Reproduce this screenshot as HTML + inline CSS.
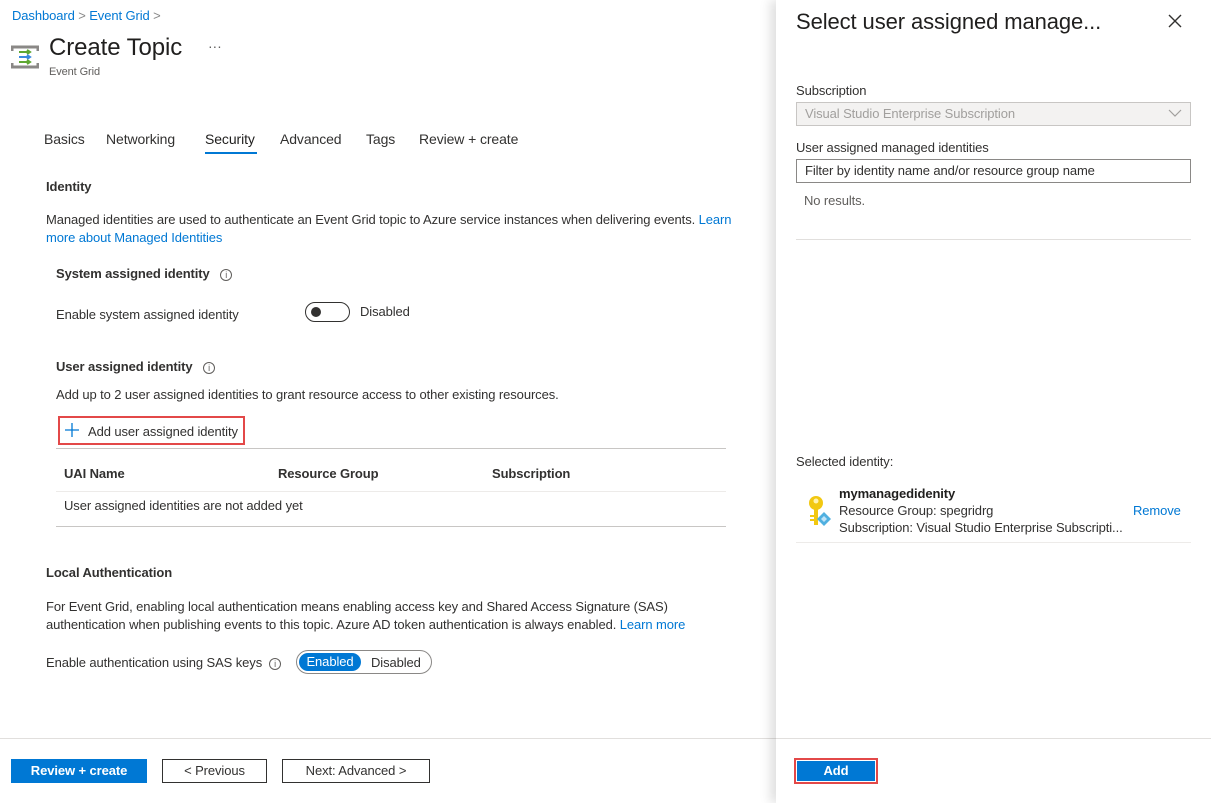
<!DOCTYPE html>
<html><head><meta charset="utf-8"><style>
*{margin:0;padding:0;box-sizing:border-box}
body{width:1211px;height:803px;overflow:hidden;background:#fff;font-family:"Liberation Sans",sans-serif;font-size:13px;color:#323130;position:relative;letter-spacing:-0.1px}
.a{position:absolute;white-space:nowrap}
.l{color:#0078d4}
.b{font-weight:bold}
.info{display:inline-block;width:12px;height:12px;border:1px solid #605e5c;border-radius:50%;font-size:9px;text-align:center;line-height:10px;color:#605e5c;vertical-align:middle}
.btn{position:absolute;height:24px;border:1px solid #323130;text-align:center;line-height:22px;font-size:13px}
</style></head><body>
<div class="a" style="left:12px;top:8px;font-size:13px"><span class="l">Dashboard</span> <span style="color:#888">&gt;</span> <span class="l">Event Grid</span> <span style="color:#888">&gt;</span></div>
<svg class="a" style="left:11px;top:44px" width="28" height="26"><path d="M1 7V3H27V7M1 19V23H27V19" stroke="#8a8886" stroke-width="3" fill="none"/><path d="M8 8H19M16 6L19 8L16 10" stroke="#5ea832" stroke-width="2" fill="none"/><path d="M8 13H19M16 11L19 13L16 15" stroke="#3c8ae0" stroke-width="2" fill="none"/><path d="M8 18H19M16 16L19 18L16 20" stroke="#5ea832" stroke-width="2" fill="none"/></svg>
<div class="a" style="left:49px;top:34px;font-size:24px;color:#201f1e">Create Topic</div>
<div class="a" style="left:208px;top:38px;font-size:14px;color:#605e5c">···</div>
<div class="a" style="left:49px;top:66px;font-size:11px;color:#605e5c">Event Grid</div>

<div class="a" style="left:44px;top:131px;font-size:14px">Basics</div>
<div class="a" style="left:106px;top:131px;font-size:14px">Networking</div>
<div class="a" style="left:205px;top:131px;font-size:14px;color:#201f1e">Security</div>
<div class="a" style="left:205px;top:152px;width:52px;height:2px;background:#0078d4"></div>
<div class="a" style="left:280px;top:131px;font-size:14px">Advanced</div>
<div class="a" style="left:366px;top:131px;font-size:14px">Tags</div>
<div class="a" style="left:419px;top:131px;font-size:14px">Review + create</div>

<div class="a b" style="left:46px;top:179px">Identity</div>
<div class="a" style="left:46px;top:211px;line-height:18px">Managed identities are used to authenticate an Event Grid topic to Azure service instances when delivering events. <span class="l">Learn</span><br><span class="l">more about Managed Identities</span></div>
<div class="a b" style="left:56px;top:266px">System assigned identity &nbsp;&nbsp;<span class="info" style="font-weight:normal">i</span></div>
<div class="a" style="left:56px;top:307px">Enable system assigned identity</div>
<div class="a" style="left:305px;top:302px;width:45px;height:20px;border:1px solid #323130;border-radius:10px"><div style="position:absolute;left:5px;top:4px;width:10px;height:10px;border-radius:50%;background:#323130"></div></div>
<div class="a" style="left:360px;top:304px">Disabled</div>
<div class="a b" style="left:56px;top:359px">User assigned identity &nbsp;&nbsp;<span class="info" style="font-weight:normal">i</span></div>
<div class="a" style="left:56px;top:387px">Add up to 2 user assigned identities to grant resource access to other existing resources.</div>
<div class="a" style="left:58px;top:416px;width:187px;height:29px;border:2px solid #e34848"></div>
<svg class="a" style="left:64px;top:422px" width="16" height="16"><path d="M8 1V15M1 8H15" stroke="#0078d4" stroke-width="1.3"/></svg>
<div class="a" style="left:88px;top:424px">Add user assigned identity</div>
<div class="a" style="left:56px;top:448px;width:670px;height:1px;background:#c8c6c4"></div>
<div class="a b" style="left:64px;top:466px">UAI Name</div>
<div class="a b" style="left:278px;top:466px">Resource Group</div>
<div class="a b" style="left:492px;top:466px">Subscription</div>
<div class="a" style="left:56px;top:491px;width:670px;height:1px;background:#edebe9"></div>
<div class="a" style="left:64px;top:498px">User assigned identities are not added yet</div>
<div class="a" style="left:56px;top:526px;width:670px;height:1px;background:#c8c6c4"></div>

<div class="a b" style="left:46px;top:565px">Local Authentication</div>
<div class="a" style="left:46px;top:598px;line-height:18px">For Event Grid, enabling local authentication means enabling access key and Shared Access Signature (SAS)<br>authentication when publishing events to this topic. Azure AD token authentication is always enabled. <span class="l">Learn more</span></div>
<div class="a" style="left:46px;top:655px">Enable authentication using SAS keys &nbsp;<span class="info">i</span></div>
<div class="a" style="left:296px;top:650px;width:136px;height:24px;border:1px solid #8a8886;border-radius:12px"></div>
<div class="a" style="left:299px;top:653px;width:62px;height:18px;border-radius:9px;background:#0078d4;color:#fff;text-align:center;line-height:18px">Enabled</div>
<div class="a" style="left:371px;top:655px">Disabled</div>

<div class="a" style="left:0;top:738px;width:776px;height:1px;background:#e1dfdd"></div>
<div class="btn b" style="left:11px;top:759px;width:136px;background:#0078d4;border-color:#0078d4;color:#fff">Review + create</div>
<div class="btn" style="left:162px;top:759px;width:105px">&lt; Previous</div>
<div class="btn" style="left:282px;top:759px;width:148px">Next: Advanced &gt;</div>

<div class="a" style="left:776px;top:0;width:435px;height:803px;background:#fff;box-shadow:-6px 0 10px rgba(0,0,0,0.12)"></div>
<div class="a" style="left:796px;top:9px;font-size:22px;color:#201f1e">Select user assigned manage...</div>
<svg class="a" style="left:1168px;top:14px" width="14" height="14"><path d="M1 1L13 13M13 1L1 13" stroke="#323130" stroke-width="1.4"/></svg>
<div class="a" style="left:796px;top:83px">Subscription</div>
<div class="a" style="left:796px;top:102px;width:395px;height:24px;background:#f3f2f1;border:1px solid #c8c6c4;color:#a19f9d;padding-left:8px;line-height:22px">Visual Studio Enterprise Subscription</div>
<svg class="a" style="left:1168px;top:109px" width="14" height="9"><path d="M1 1L7 7L13 1" stroke="#a19f9d" fill="none" stroke-width="1.2"/></svg>
<div class="a" style="left:796px;top:140px">User assigned managed identities</div>
<div class="a" style="left:796px;top:159px;width:395px;height:24px;border:1px solid #8a8886;padding-left:8px;line-height:22px;color:#323130">Filter by identity name and/or resource group name</div>
<div class="a" style="left:804px;top:193px;color:#605e5c">No results.</div>
<div class="a" style="left:796px;top:239px;width:395px;height:1px;background:#e1dfdd"></div>
<div class="a" style="left:796px;top:454px">Selected identity:</div>
<svg class="a" style="left:805px;top:495px" width="28" height="34"><circle cx="11" cy="8" r="7" fill="#f2c811"/><circle cx="11" cy="6" r="2.5" fill="#fff3b0"/><rect x="9" y="13" width="4" height="17" fill="#f2c811"/><rect x="5" y="20" width="4" height="2" fill="#f2c811"/><rect x="5" y="24" width="4" height="2" fill="#f2c811"/><path d="M19 17L26 24L19 31L12 24Z" fill="#50b0e0"/><path d="M19 21L22 24L19 27L16 24Z" fill="#c0e4f8"/></svg>
<div class="a b" style="left:839px;top:486px;color:#201f1e">mymanagedidenity</div>
<div class="a" style="left:839px;top:503px">Resource Group: spegridrg</div>
<div class="a" style="left:839px;top:520px">Subscription: Visual Studio Enterprise Subscripti...</div>
<div class="a l" style="left:1133px;top:503px">Remove</div>
<div class="a" style="left:796px;top:542px;width:395px;height:1px;background:#edebe9"></div>
<div class="a" style="left:776px;top:738px;width:435px;height:1px;background:#e1dfdd"></div>
<div class="a" style="left:794px;top:758px;width:84px;height:26px;border:2px solid #e34848;padding:1px"><div class="b" style="background:#0078d4;color:#fff;height:100%;text-align:center;line-height:20px">Add</div></div>
</body></html>
